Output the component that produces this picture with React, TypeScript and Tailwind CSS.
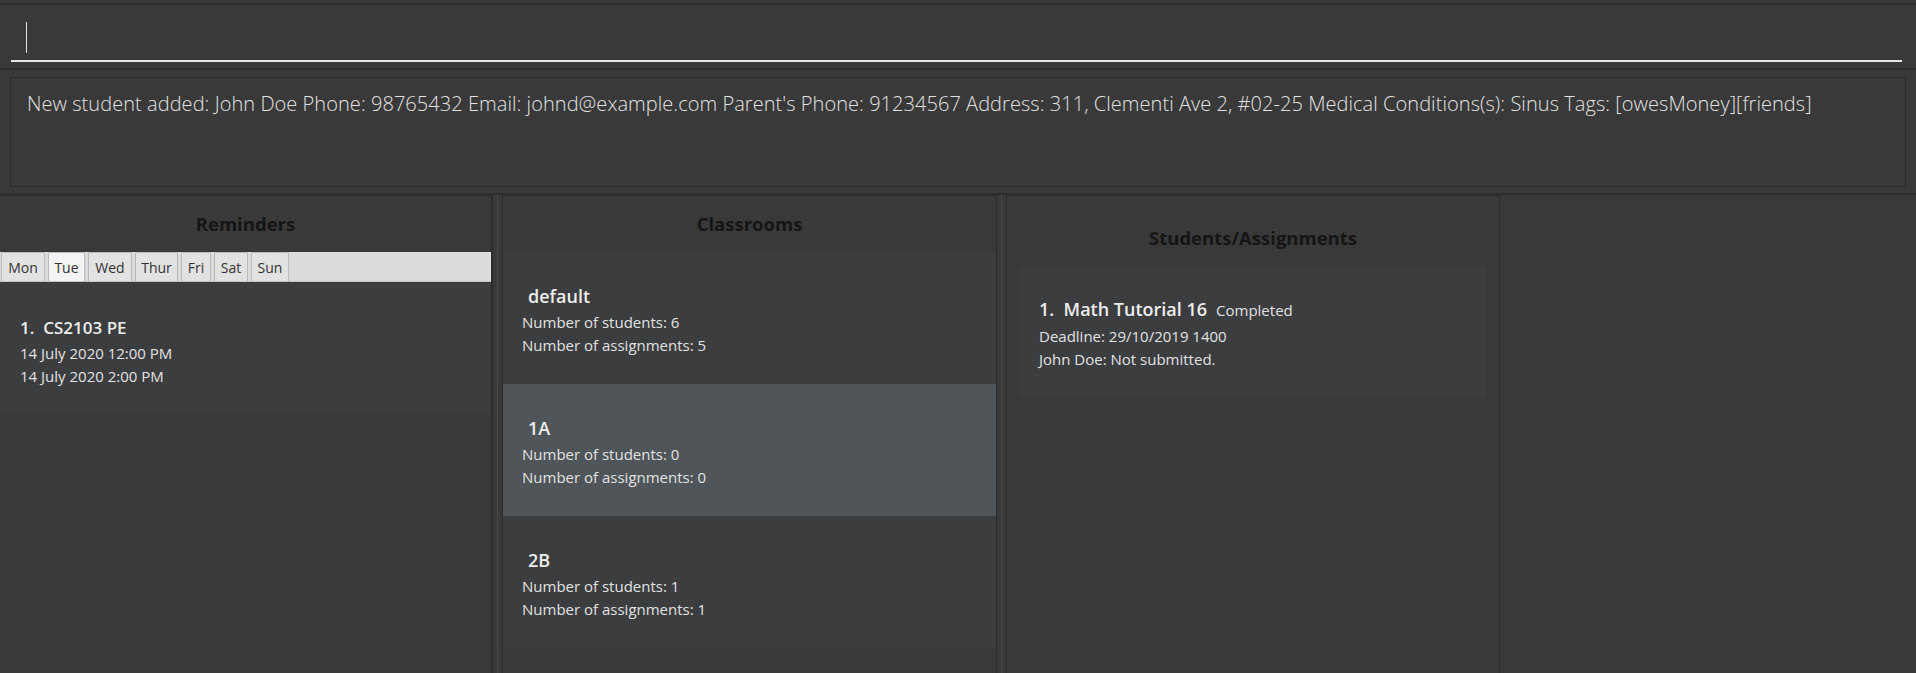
import React from "react";

const days = [
  { label: "Mon", w: "w-[44px]" },
  { label: "Tue", w: "w-[37px]" },
  { label: "Wed", w: "w-[44px]" },
  { label: "Thur", w: "w-[43px]" },
  { label: "Fri", w: "w-[30px]" },
  { label: "Sat", w: "w-[34px]" },
  { label: "Sun", w: "w-[38px]" },
];

const classrooms = [
  { name: "default", students: 6, assignments: 5, selected: false },
  { name: "1A", students: 0, assignments: 0, selected: true },
  { name: "2B", students: 1, assignments: 1, selected: false },
];

function PanelGap() {
  return (
    <div className="w-[9px] shrink-0 flex justify-center">
      <div className="w-px h-full bg-[#4a4a4a]" />
    </div>
  );
}

export default function App() {
  return (
    <div className="w-[1916px] h-[673px] overflow-hidden bg-[#393939] font-['Open_Sans','Noto_Sans',sans-serif] flex flex-col">
      {/* command box */}
      <div className="h-[67px] shrink-0 mt-[3px] border-t-2 border-b-2 border-[#2e2e2e] px-[11px] pt-[14px]">
        <div className="h-[43px] border-b-2 border-[#e6e6e6] mr-[3px] pl-[15px] pt-[3px]">
          <div className="w-px h-[31px] bg-[#e0e0e0]" />
        </div>
      </div>

      {/* result display */}
      <div className="h-[125px] shrink-0 border-b-2 border-[#2e2e2e] px-[10px] pt-[7px]">
        <div className="h-[110px] border border-[#2a2a2a] px-[16px] pt-[12px] text-[20px] leading-[28px] font-light tracking-[0.05px] text-[#e2e2e2]">
          New student added: John Doe Phone: 98765432 Email: johnd@example.com Parent's Phone: 91234567 Address: 311, Clementi Ave 2, #02-25 Medical Conditions(s): Sinus Tags: [owesMoney][friends]
        </div>
      </div>

      {/* panels */}
      <div className="flex-1 flex min-h-0">
        {/* reminders */}
        <div className="w-[493px] shrink-0 border-r-2 border-t border-[#2c2c2c] flex flex-col">
          <div className="h-[56px] flex items-center justify-center text-[18.5px] font-bold text-[#151515]">
            Reminders
          </div>
          <div className="h-[30px] bg-[#dcdcdc] border-b border-[#c4c4c4] flex items-end gap-[3px] pl-[1px]">
            {days.map((d) => (
              <div
                key={d.label}
                className={`${d.w} h-[29px] flex items-center justify-center text-[14px] text-[#333] border border-b-0 border-[#b9b9b9] rounded-t-[2px] ${d.label === "Tue" ? "bg-[#f4f4f4]" : "bg-[#e2e2e2]"}`}
              >
                {d.label}
              </div>
            ))}
          </div>
          <div className="h-[132px] bg-[#3c3d3f] px-[20px] pt-[31px]">
            <div className="text-[17px] font-semibold text-[#eeeeee] leading-[29px]">1.&nbsp; CS2103 PE</div>
            <div className="text-[15px] text-[#e2e2e2] leading-[23px]">14 July 2020 12:00 PM</div>
            <div className="text-[15px] text-[#e2e2e2] leading-[23px]">14 July 2020 2:00 PM</div>
          </div>
        </div>

        <PanelGap />

        {/* classrooms */}
        <div className="w-[495px] shrink-0 border border-b-0 border-[#2c2c2c] flex flex-col">
          <div className="h-[56px] flex items-center justify-center text-[18.5px] font-bold text-[#151515]">
            Classrooms
          </div>
          {classrooms.map((c) => (
            <div
              key={c.name}
              className={`h-[132px] shrink-0 px-[19px] pt-[30px] ${c.selected ? "bg-[#4f5558]" : "bg-[#3c3d3f]"}`}
            >
              <div className="pl-[6px] text-[18px] font-semibold text-[#eeeeee] leading-[29px]">{c.name}</div>
              <div className="text-[15px] text-[#e2e2e2] leading-[23px]">Number of students: {c.students}</div>
              <div className="text-[15px] text-[#e2e2e2] leading-[23px]">Number of assignments: {c.assignments}</div>
            </div>
          ))}
        </div>

        <PanelGap />

        {/* students / assignments */}
        <div className="w-[494px] shrink-0 border border-b-0 border-[#2c2c2c] flex flex-col px-[13px]">
          <div className="h-[70px] pt-[14px] flex items-center justify-center text-[18.5px] font-bold text-[#151515]">
            Students/Assignments
          </div>
          <div className="h-[132px] bg-[#3c3d3f] px-[19px] pt-[29px]">
            <div className="flex items-baseline gap-[9px] leading-[29px]">
              <span className="text-[18px] font-semibold text-[#eeeeee]">1.&nbsp; Math Tutorial 16</span>
              <span className="text-[15px] text-[#e2e2e2]">Completed</span>
            </div>
            <div className="text-[15px] text-[#e2e2e2] leading-[23px]">Deadline: 29/10/2019 1400</div>
            <div className="text-[15px] text-[#e2e2e2] leading-[23px]">John Doe: Not submitted.</div>
          </div>
        </div>

        <div className="flex-1" />
      </div>
    </div>
  );
}
